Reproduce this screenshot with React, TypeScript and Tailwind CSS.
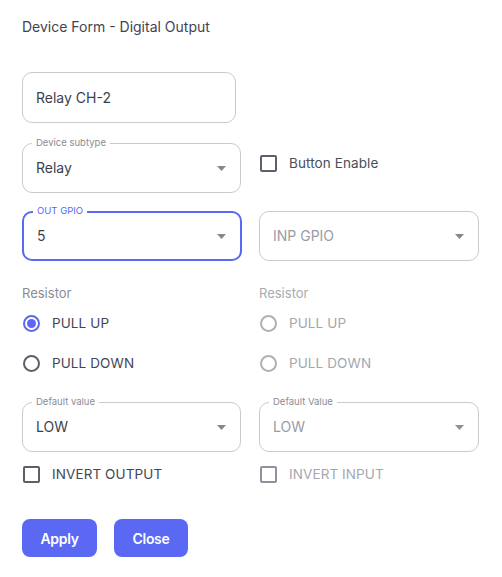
import { ReactNode } from 'react';

const BLUE = 'border-[#5a68f3]';

function Caret({ muted }: { muted?: boolean }) {
  return (
    <svg width="9" height="5" viewBox="0 0 9 5" className={muted ? 'text-[#8f919a]' : 'text-[#85878f]'}>
      <path d="M0 0h9L4.5 5z" fill="currentColor" />
    </svg>
  );
}

function Select({ label, value, width, focused, disabled, placeholder }: {
  label?: string; value: string; width: string; focused?: boolean; disabled?: boolean; placeholder?: boolean;
}) {
  return (
    <div className={`relative h-[50px] ${width} rounded-[10px] flex items-center justify-between pl-[13px] pr-[14px] ${focused ? `border-2 ${BLUE} pl-[12px] pr-[13px]` : 'border border-[#c9cad0]'}`}>
      {label && (
        <span className={`absolute -top-[7px] left-[9px] px-[4px] bg-white text-[9.5px] leading-[12px] ${focused ? 'text-[#5a68f3] -top-[8px] left-[8px]' : 'text-[#8a8c95]'}`}>
          {label}
        </span>
      )}
      <span className={`text-[14px] pb-[1px] ${disabled || placeholder ? 'text-[#9a9ca5]' : 'text-[#3b3f4c]'}`}>{value}</span>
      <Caret muted={disabled} />
    </div>
  );
}

function Radio({ checked, disabled, children }: { checked?: boolean; disabled?: boolean; children: ReactNode }) {
  return (
    <div className="flex items-center h-[20px]">
      <span className={`w-[17px] h-[17px] rounded-full border-2 flex items-center justify-center ml-[1px] ${checked ? BLUE : disabled ? 'border-[#aeb0b6]' : 'border-[#5d5f6a]'}`}>
        {checked && <span className="w-[9px] h-[9px] rounded-full bg-[#5a68f3]" />}
      </span>
      <span className={`ml-[12px] text-[13.5px] tracking-[0.1px] ${disabled ? 'text-[#a5a7af]' : 'text-[#434654]'}`}>{children}</span>
    </div>
  );
}

function Checkbox({ disabled, children }: { disabled?: boolean; children: ReactNode }) {
  return (
    <div className="flex items-center h-[20px]">
      <span className={`w-[17px] h-[17px] rounded-[2px] border-2 ml-[1px] ${disabled ? 'border-[#8f919c]' : 'border-[#5d5f6a]'}`} />
      <span className={`ml-[12px] text-[13.5px] tracking-[0.1px] ${disabled ? 'text-[#a5a7af]' : 'text-[#434654]'}`}>{children}</span>
    </div>
  );
}

export default function App() {
  return (
    <div className="w-[502px] h-[577px] bg-white pl-[22px] pt-[18px] font-['Inter',sans-serif]">
      <div className="text-[14px] leading-[18px] text-[#3f4354]">Device Form - Digital Output</div>

      <div className="mt-[36px] h-[51px] w-[214px] rounded-[10px] border border-[#c9cad0] flex items-center pl-[13px]">
        <span className="text-[14px] text-[#3b3f4c]">Relay CH-2</span>
      </div>

      <div className="mt-[20px] flex gap-[18px]">
        <Select label="Device subtype" value="Relay" width="w-[219px]" />
        <div className="flex items-center pb-[10px]">
          <Checkbox><span className="text-[#4b4e5a]">Button Enable</span></Checkbox>
        </div>
      </div>

      <div className="mt-[18px] flex gap-[17px]">
        <Select label="OUT GPIO" value="5" width="w-[220px]" focused />
        <Select value="INP GPIO" width="w-[220px]" placeholder />
      </div>

      <div className="mt-[23px] grid grid-cols-[237px_220px]">
        <div className="flex flex-col">
          <div className="text-[13px] leading-[18px] text-[#8a8c95]">Resistor</div>
          <div className="mt-[11px] flex flex-col gap-[20px]">
            <Radio checked>PULL UP</Radio>
            <Radio>PULL DOWN</Radio>
          </div>
          <div className="mt-[29px]">
            <Select label="Default value" value="LOW" width="w-[219px]" />
          </div>
          <div className="mt-[12px]">
            <Checkbox>INVERT OUTPUT</Checkbox>
          </div>
        </div>
        <div className="flex flex-col">
          <div className="text-[13px] leading-[18px] text-[#a8aab1]">Resistor</div>
          <div className="mt-[11px] flex flex-col gap-[20px]">
            <Radio disabled>PULL UP</Radio>
            <Radio disabled>PULL DOWN</Radio>
          </div>
          <div className="mt-[29px]">
            <Select label="Default Value" value="LOW" width="w-[220px]" disabled />
          </div>
          <div className="mt-[12px]">
            <Checkbox disabled>INVERT INPUT</Checkbox>
          </div>
        </div>
      </div>

      <div className="mt-[35px] flex gap-[17px]">
        <button className="h-[38px] w-[75px] rounded-[8px] bg-[#5a68f3] text-white text-[14px] font-semibold tracking-[-0.3px]">Apply</button>
        <button className="h-[38px] w-[74px] rounded-[8px] bg-[#5a68f3] text-white text-[14px] font-semibold tracking-[-0.3px]">Close</button>
      </div>
    </div>
  );
}
